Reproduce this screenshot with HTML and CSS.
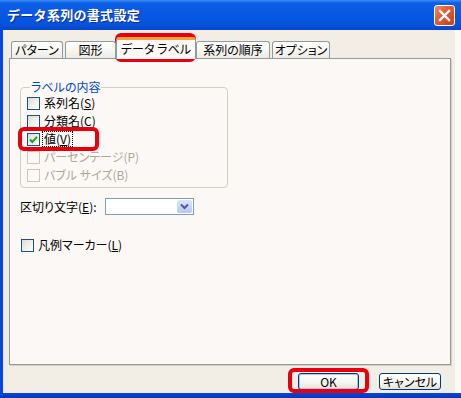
FILE: index.html
```html
<!DOCTYPE html>
<html lang="ja">
<head>
<meta charset="utf-8">
<title>データ系列の書式設定</title>
<link rel="stylesheet" href="styles.css">
</head>
<body>
<div class="window">
  <div class="titlebar">
    <span class="title">データ系列の書式設定</span>
    <span class="close">
      <svg width="13" height="13" viewBox="0 0 13 13"><path d="M2 2 L11 11 M11 2 L2 11" stroke="#fff" stroke-width="2.4" stroke-linecap="square"/></svg>
    </span>
  </div>
  <div class="frame">
    <div class="client">
      <div class="tabs">
        <div class="tab t1">パターン</div>
        <div class="tab t2">図形</div>
        <div class="tab t3 active">データ ラベル</div>
        <div class="tab t4">系列の順序</div>
        <div class="tab t5">オプション</div>
      </div>
      <div class="panel">
        <fieldset class="group">
          <legend>ラベルの内容</legend>
          <div class="check-row"><span class="cb"></span><span class="lbl">系列名(<u>S</u>)</span></div>
          <div class="check-row"><span class="cb"></span><span class="lbl">分類名(<u>C</u>)</span></div>
          <div class="check-row"><span class="cb checked"><svg width="11" height="11" viewBox="0 0 11 11"><path d="M2 5.5 L4.3 8 L9 2.8" fill="none" stroke="#21a121" stroke-width="2"/></svg></span><span class="lbl focus">値(<u>V</u>)</span></div>
          <div class="check-row disabled"><span class="cb"></span><span class="lbl">パーセンテージ(P)</span></div>
          <div class="check-row disabled"><span class="cb"></span><span class="lbl">バブル サイズ(B)</span></div>
        </fieldset>
        <div class="sep-row">
          <span class="sep-label">区切り文字(<u>E</u>):</span>
          <span class="combo"><span class="combo-btn"><svg width="9" height="7" viewBox="0 0 9 7"><path d="M1 1.5 L4.5 5 L8 1.5" fill="none" stroke="#4d6185" stroke-width="2"/></svg></span></span>
        </div>
        <div class="check-row legend-row"><span class="cb"></span><span class="lbl">凡例マーカー(<u>L</u>)</span></div>
      </div>
      <div class="buttons">
        <button class="btn default">OK</button>
        <button class="btn">キャンセル</button>
      </div>
    </div>
    <div class="rstrip"></div>
  </div>
  <div class="bottom"></div>
  <div class="mark mark-tab"></div>
  <div class="mark mark-val"></div>
  <div class="mark mark-ok"></div>
</div>
</body>
</html>
```
FILE: styles.css
```css
html, body {
  margin: 0;
  padding: 0;
  background: #ffffff;
}
body {
  font-family: "Noto Sans CJK JP", "Noto Sans", sans-serif;
  font-size: 12px;
  font-weight: 400;
  color: #000;
  font-feature-settings: "palt" 1;
}
.window {
  position: relative;
  width: 461px;
  height: 398px;
  display: flex;
  flex-direction: column;
  overflow: hidden;
}
.titlebar {
  height: 30px;
  flex: none;
  display: flex;
  align-items: center;
  justify-content: space-between;
  padding: 0 6px 0 7px;
  box-sizing: border-box;
  background: linear-gradient(to bottom, #3d8cf5 0, #0d5fe6 3px, #0a58e4 40%, #0753dc 80%, #0646cc 100%);
}
.title {
  color: #fff;
  font-weight: bold;
  font-size: 13px;
  line-height: 16px;
  text-shadow: 1px 1px 0 #0a2f9a;
  font-feature-settings: normal;
  letter-spacing: 0.3px;
}
.close {
  width: 21px;
  height: 21px;
  box-sizing: border-box;
  border: 1px solid #fff;
  border-radius: 3px;
  background: linear-gradient(135deg, #f08a66 0%, #e05a32 45%, #c8401c 100%);
  display: flex;
  align-items: center;
  justify-content: center;
  margin-top: 1px;
}
.frame {
  flex: 1;
  display: flex;
  border-left: 3px solid #0a45d6;
}
.client {
  flex: 1;
  background: #f3eee5;
  display: flex;
  flex-direction: column;
  padding: 7px 4px 3px 6px;
}
.rstrip {
  width: 6px;
  background: #fbfaf7;
}
.bottom {
  height: 5px;
  flex: none;
  background: linear-gradient(to bottom, #0a45d6, #0736b8);
}
.tabs {
  height: 21px;
  display: flex;
  align-items: flex-end;
  gap: 2px;
  padding-left: 2px;
  position: relative;
  z-index: 1;
}
.tab {
  height: 17px;
  box-sizing: border-box;
  border: 1px solid #919b9c;
  border-bottom: none;
  border-radius: 3px 3px 0 0;
  background: linear-gradient(to bottom, #ffffff 0%, #f7f6f2 50%, #eceae3 100%);
  text-align: center;
  line-height: 15px;
  white-space: nowrap;
}
.t1 { width: 52px; }
.t2 { width: 51px; }
.t3 { width: 80px; }
.t4 { width: 74px; }
.t5 { width: 58px; }
.tab.active {
  height: 22px;
  margin: 0 -2px -1px;
  background: #fbf8f5;
  border-top: 3px solid #f0a43a;
  line-height: 18px;
}
.panel {
  height: 307px;
  box-sizing: border-box;
  border: 1px solid #919b9c;
  background: #fbf8f5;
  box-shadow: 1px 1px 0 #d4d0c4;
  padding: 22px 0 0 10px;
}
.group {
  margin: 0;
  width: 208px;
  box-sizing: border-box;
  border: 1px solid #d0d0bf;
  border-radius: 4px;
  padding: 1px 0 3px 6px;
  min-width: 0;
}
.group legend {
  color: #0046d5;
  line-height: 12px;
  padding: 0 1px;
  margin-left: 3px;
}
.check-row {
  height: 18px;
  display: flex;
  align-items: center;
}
.cb {
  width: 13px;
  height: 13px;
  box-sizing: border-box;
  border: 1px solid #1c5180;
  background: linear-gradient(135deg, #dcdcd7 0%, #f2f2ee 60%, #ffffff 100%);
  display: flex;
  align-items: center;
  justify-content: center;
  flex: none;
}
.lbl {
  margin-left: 4px;
  line-height: 14px;
  white-space: nowrap;
}
.lbl.focus {
  outline: 1px dotted #000;
  outline-offset: 0;
  padding: 0 1px;
  margin-left: 3px;
}
.check-row.disabled .cb {
  border-color: #cac8bb;
  background: #fbf8f5;
}
.check-row.disabled .lbl {
  color: #aca899;
}
.sep-row {
  margin-top: 10px;
  height: 17px;
  display: flex;
  align-items: center;
}
.sep-label {
  width: 85px;
  white-space: nowrap;
}
.combo {
  width: 89px;
  height: 17px;
  box-sizing: border-box;
  border: 1px solid #7f9db9;
  background: #fff;
  display: flex;
  justify-content: flex-end;
  padding: 1px;
}
.combo-btn {
  width: 15px;
  height: 13px;
  border-radius: 2px;
  background: linear-gradient(to bottom, #dbe5fc 0%, #c3d3fa 60%, #b4c8f6 100%);
  display: flex;
  align-items: center;
  justify-content: center;
}
.legend-row {
  margin-top: 21px;
  padding-left: 1px;
}
.buttons {
  flex: 1;
  display: flex;
  justify-content: flex-end;
  align-items: flex-start;
  gap: 20px;
  padding: 8px 10px 0 0;
}
.btn {
  font-family: inherit;
  font-size: 12px;
  font-weight: 400;
  font-feature-settings: "palt" 1;
  height: 17px;
  width: 61px;
  box-sizing: border-box;
  border: 1px solid #003c74;
  border-radius: 3px;
  background: linear-gradient(to bottom, #ffffff 0%, #f5f4f0 60%, #e3e1d8 100%);
  padding: 0;
  line-height: 14px;
  color: #000;
}
.btn + .btn {
  width: 62px;
}
.btn.default {
  box-shadow: inset 0 0 0 1px #a9c5f5;
}
.mark {
  position: absolute;
  border: 4px solid #e8000e;
  border-radius: 6px;
  box-sizing: border-box;
}
.mark-tab { left: 115px; top: 33px; width: 81px; height: 29px; }
.mark-val { left: 18px; top: 127px; width: 81px; height: 24px; }
.mark-ok { left: 288px; top: 368px; width: 81px; height: 25px; }
```
